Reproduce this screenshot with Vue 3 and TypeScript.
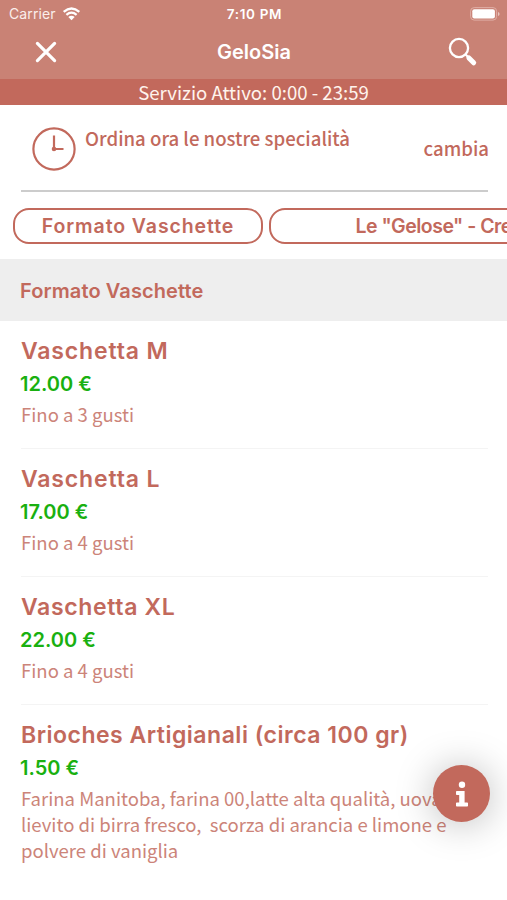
<script setup lang="ts">
interface Product {
  name: string
  price: string
  description: string
  fit: string
}

const categories: { label: string; fit: string }[] = [
  { label: 'Formato Vaschette', fit: 'first' },
  { label: 'Le "Gelose" - Cremose', fit: 'second' },
]

const products: Product[] = [
  { name: 'Vaschetta M', price: '12.00 €', description: 'Fino a 3 gusti', fit: 'm' },
  { name: 'Vaschetta L', price: '17.00 €', description: 'Fino a 4 gusti', fit: 'l' },
  { name: 'Vaschetta XL', price: '22.00 €', description: 'Fino a 4 gusti', fit: 'xl' },
  {
    name: 'Brioches Artigianali (circa 100 gr)',
    price: '1.50 €',
    description:
      'Farina Manitoba, farina 00,latte alta qualità, uova,\nlievito di birra fresco,  scorza di arancia e limone e\npolvere di vaniglia',
    fit: 'brioches',
  },
]
</script>

<template>
  <main class="screen">
    <header class="top">
      <div class="status">
        <div class="carrier">
          <span>Carrier</span>
          <svg class="wifi" viewBox="0 0 18 14">
            <path d="M1.2 4.8Q9-1.8 16.8 4.8M3.9 7.8Q9 3.5 14.1 7.8" fill="none" stroke="#fff" stroke-width="2.3" />
            <path d="M5.8 10Q9 7.3 12.2 10L9 13.3Z" fill="#fff" />
          </svg>
        </div>
        <span class="time">7:10 PM</span>
        <svg class="battery" viewBox="0 0 30 14">
          <rect x=".6" y=".6" width="26" height="12.5" rx="3.6" fill="none" stroke="#dfaea5" stroke-width="1" />
          <rect x="2.3" y="2.3" width="22.6" height="9.1" rx="2" fill="#fff" />
          <path d="M28 5v4q1.6-.7 1.6-2T28 5" fill="#e8c5bf" />
        </svg>
      </div>
      <nav class="bar">
        <button class="icon-button" aria-label="Chiudi">
          <svg width="22" height="22" viewBox="0 0 22 22">
            <path d="M2.4 2.4l17.2 17.2M19.6 2.4L2.4 19.6" stroke="#fff" stroke-width="3.2" stroke-linecap="round" />
          </svg>
        </button>
        <h1>GeloSia</h1>
        <button class="icon-button search" aria-label="Cerca">
          <svg width="30" height="30" viewBox="0 0 30 30">
            <circle cx="11" cy="11" r="9.1" fill="none" stroke="#fff" stroke-width="2.3" />
            <path d="M17.3 17.3l3 3" stroke="#fff" stroke-width="2.3" />
            <path d="M20.9 20.9l4.8 4.9" stroke="#fff" stroke-width="5" stroke-linecap="round" />
          </svg>
        </button>
      </nav>
    </header>
    <div class="service">Servizio Attivo: 0:00 - 23:59</div>

    <section class="order">
      <svg class="clock" width="44" height="44" viewBox="0 0 44 44" fill="none" stroke="#c2695c">
        <circle cx="22" cy="22" r="20.6" stroke-width="2.2" />
        <path d="M22 8.5V22H31.5" stroke-width="2.2" />
        <circle cx="22" cy="22" r="1.4" stroke-width="1.8" fill="#c2695c" />
      </svg>
      <p class="order-text">Ordina ora le nostre specialità</p>
      <a class="change">cambia</a>
    </section>

    <div class="chips">
      <button v-for="c in categories" :key="c.label" class="chip" :class="c.fit"><span>{{ c.label }}</span></button>
    </div>

    <h2 class="section-title"><span>Formato Vaschette</span></h2>

    <ul class="products">
      <li v-for="p in products" :key="p.name" class="product" :class="p.fit">
        <h3>{{ p.name }}</h3>
        <p class="price">{{ p.price }}</p>
        <p class="description">{{ p.description }}</p>
      </li>
    </ul>

    <button class="info" aria-label="Informazioni">
      <svg width="14" height="28" viewBox="0 0 14 28" fill="#fff">
        <circle cx="7" cy="4.8" r="3.2" />
        <path d="M1.8 11h7.8v11.4h2.6q.8 0 .8.8v2.5q0 .8-.8.8H1.8q-.8 0-.8-.8v-2.5q0-.8.8-.8h2.4v-7.3H1.8q-.8 0-.8-.8v-2.5q0-.8.8-.8z" />
      </svg>
    </button>
  </main>
</template>

<style>
body {
  background: #fff;
}
</style>

<style scoped>
.screen {
  position: relative;
  width: 507px;
  height: 900px;
  overflow: hidden;
  background: #fff;
  color: #c2695c;
  font-family: "Noto Sans CJK SC", sans-serif;
}
h1, h2, h3, p, ul {
  margin: 0;
  padding: 0;
}
button {
  margin: 0;
  padding: 0;
  border: 0;
  background: none;
  color: inherit;
}
.top {
  height: 79px;
  background: #c98275;
  color: #fff;
  font-family: Inter, sans-serif;
}
.status {
  display: grid;
  grid-template-columns: 1fr auto 1fr;
  align-items: center;
  height: 27px;
  padding: 0 7px 0 9px;
  font-size: 14px;
}
.carrier {
  display: flex;
  align-items: center;
  gap: 6px;
  color: #fbeeec;
  letter-spacing: .1px;
}
.wifi {
  width: 19px;
  height: 14px;
}
.time {
  font-size: 13.5px;
  font-weight: 600;
  letter-spacing: .65px;
}
.battery {
  width: 30px;
  height: 14px;
  justify-self: end;
}
.bar {
  display: grid;
  grid-template-columns: 1fr auto 1fr;
  align-items: center;
  height: 50px;
  padding: 0 29px 0 35px;
}
.bar h1 {
  margin-left: -5px;
  font-size: 20px;
  font-weight: 600;
}
.icon-button {
  display: flex;
  justify-self: start;
}
.search {
  justify-self: end;
}
.service {
  height: 26px;
  background: #c2695c;
  color: #fff4ed;
  font-size: 18.6px;
  line-height: 26px;
  text-align: center;
}
.order {
  display: flex;
  height: 85px;
  margin: 0 19px 0 21px;
  padding: 0 0 0 11px;
  border-bottom: 2px solid #ccc;
}
.clock {
  margin-top: 22px;
}
.order-text {
  flex: 1;
  margin: 20px 0 0 9px;
  font-size: 18.6px;
  font-weight: 500;
  line-height: 26px;
  white-space: nowrap;
}
.change {
  margin: 30px -1px 0 0;
  font-size: 18.6px;
  font-weight: 500;
  line-height: 26px;
}
.chips {
  display: flex;
  gap: 6px;
  height: 36px;
  margin: 16px 0 15px;
  padding-left: 13px;
}
.chip {
  flex: none;
  box-sizing: border-box;
  width: 250px;
  border: 2px solid #c2695c;
  border-radius: 16px;
  font: 600 19.5px/31px Inter, sans-serif;
  letter-spacing: .9px;
  white-space: nowrap;
}
.chip.second {
  width: 379px;
  letter-spacing: -.5px;
}
.section-title {
  height: 62px;
  padding-left: 20px;
  background: #eee;
  font: 600 20px/65px Inter, sans-serif;
  letter-spacing: .1px;
}
.products {
  margin: 0 19px 0 21px;
  list-style: none;
}
.product {
  box-sizing: border-box;
  height: 128px;
  padding-top: 15px;
  border-bottom: 1px solid #f4f4f4;
}
.product:last-child {
  height: auto;
  border: 0;
}
.product h3 {
  font: 600 23px/30px Inter, sans-serif;
  letter-spacing: .85px;
  white-space: nowrap;
}
.product.xl h3 {
  letter-spacing: .65px;
}
.product.brioches h3 {
  letter-spacing: .5px;
}
.price {
  margin-left: -1px;
  color: #19b010;
  font: 600 20px/36px Inter, sans-serif;
}
.description {
  margin-top: -1px;
  color: #cc8479;
  font-size: 18.55px;
  line-height: 26px;
  white-space: pre;
}
.info {
  position: absolute;
  top: 765px;
  left: 433px;
  display: grid;
  place-items: center;
  width: 57px;
  height: 57px;
  border-radius: 50%;
  background: #c2695c;
  box-shadow: 0 2px 38px rgba(0, 0, 0, .27);
}
</style>
